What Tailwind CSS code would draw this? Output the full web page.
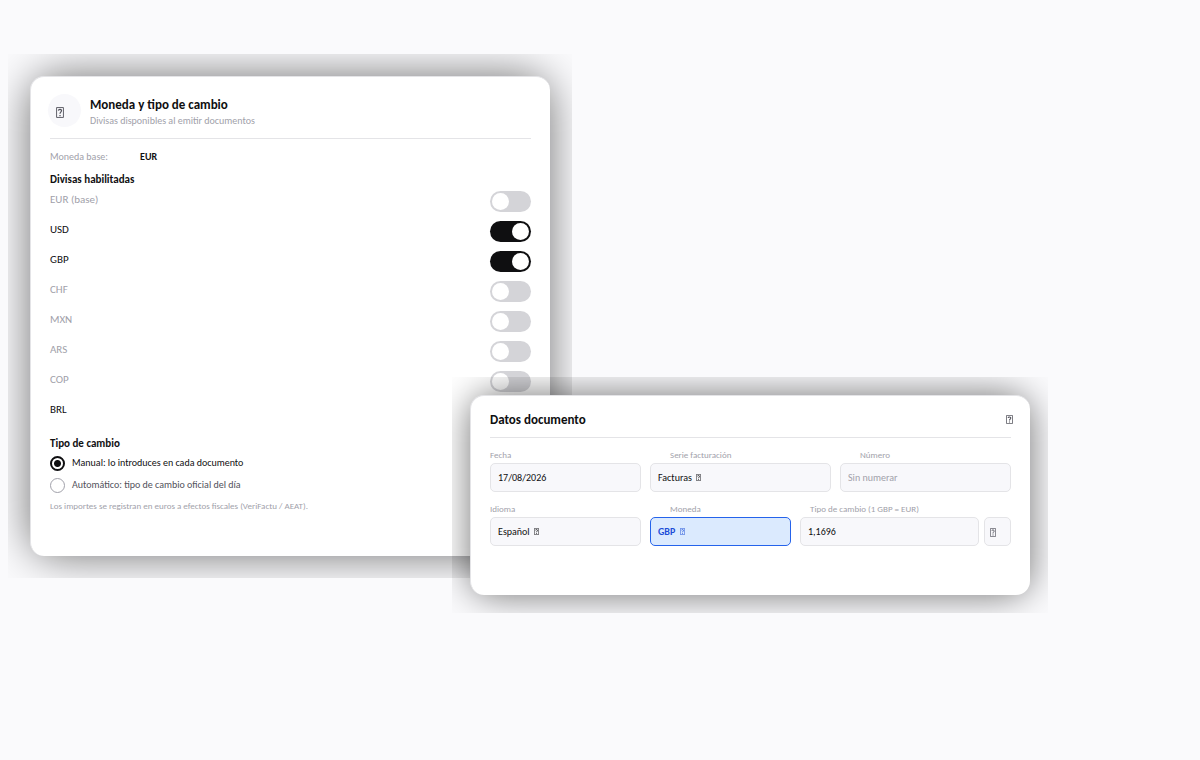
<!DOCTYPE html>
<html lang="es">
<head>
<meta charset="utf-8">
<meta name="viewport" content="width=device-width, initial-scale=1">
<title>Moneda y tipo de cambio</title>
<script src="https://cdn.jsdelivr.net/npm/@tailwindcss/browser@4"></script>
</head>
<body class="min-h-screen bg-[#fafafc] font-[Carlito,Lato,sans-serif] text-[#0f0f11]">
<svg class="hidden" aria-hidden="true">
  <symbol id="glyph" viewBox="0 0 7 10" preserveAspectRatio="none">
    <path d="M.5 .5h6v9h-6z" fill="none" stroke="currentColor" stroke-width=".8"/>
    <path d="M2.100 3.300c.2-1.600 2.900-1.400 2.700.1C4.700 4.700 3.500 4.600 3.500 6.100M3.500 7.200v1.100" fill="none" stroke="currentColor" stroke-width="1.1"/>
  </symbol>
</svg>
<main class="relative min-h-screen px-2 pt-[54px]">
  <div class="relative w-full max-w-[564px] overflow-hidden p-[22px]">
    <div class="absolute inset-[22px] rounded-[28px] bg-black/55 blur-[22px]"></div>
    <section class="relative min-h-[480px] rounded-[14px] border-t border-l border-[#e4e4e7] bg-white pt-[17px] pr-[19px] pl-[19px]">
      <header class="flex h-[45px] border-b border-[#e4e4e7]">
        <span class="-ml-0.5 flex size-[33px] shrink-0 items-center justify-center rounded-full bg-[#f8f8fb] pt-1 pr-2.5 text-[#52525b]"><svg class="h-[11px] w-2"><use href="#glyph"/></svg></span>
        <div class="pl-[9px]">
          <h1 class="text-[13px] leading-[22px] font-bold">Moneda y tipo de cambio</h1>
          <p class="text-[10px] leading-[10px] text-[#a1a1aa]">Divisas disponibles al emitir documentos</p>
        </div>
      </header>
      <dl class="mt-2.5 flex text-[10px] leading-4"><dt class="w-[90px] text-[#a1a1aa]">Moneda base:</dt><dd class="font-bold">EUR</dd></dl>
      <fieldset class="mt-[6px]">
        <legend class="text-[11px] leading-[18px] font-bold">Divisas habilitadas</legend>
        <div class="mt-0.5 text-[11px] leading-[18px]">
          <label class="flex h-[30px] justify-between text-[#a1a1aa]">EUR (base)<input type="checkbox" class="relative h-[21px] w-[41px] appearance-none rounded-full bg-[#d4d4d8] before:absolute before:top-0.5 before:left-0.5 before:size-[17px] before:rounded-full before:bg-white checked:bg-[#0f0f11] checked:before:left-[22px]"></label>
          <label class="flex h-[30px] justify-between">USD<input type="checkbox" checked class="relative h-[21px] w-[41px] appearance-none rounded-full bg-[#d4d4d8] before:absolute before:top-0.5 before:left-0.5 before:size-[17px] before:rounded-full before:bg-white checked:bg-[#0f0f11] checked:before:left-[22px]"></label>
          <label class="flex h-[30px] justify-between">GBP<input type="checkbox" checked class="relative h-[21px] w-[41px] appearance-none rounded-full bg-[#d4d4d8] before:absolute before:top-0.5 before:left-0.5 before:size-[17px] before:rounded-full before:bg-white checked:bg-[#0f0f11] checked:before:left-[22px]"></label>
          <label class="flex h-[30px] justify-between text-[#a1a1aa]">CHF<input type="checkbox" class="relative h-[21px] w-[41px] appearance-none rounded-full bg-[#d4d4d8] before:absolute before:top-0.5 before:left-0.5 before:size-[17px] before:rounded-full before:bg-white checked:bg-[#0f0f11] checked:before:left-[22px]"></label>
          <label class="flex h-[30px] justify-between text-[#a1a1aa]">MXN<input type="checkbox" class="relative h-[21px] w-[41px] appearance-none rounded-full bg-[#d4d4d8] before:absolute before:top-0.5 before:left-0.5 before:size-[17px] before:rounded-full before:bg-white checked:bg-[#0f0f11] checked:before:left-[22px]"></label>
          <label class="flex h-[30px] justify-between text-[#a1a1aa]">ARS<input type="checkbox" class="relative h-[21px] w-[41px] appearance-none rounded-full bg-[#d4d4d8] before:absolute before:top-0.5 before:left-0.5 before:size-[17px] before:rounded-full before:bg-white checked:bg-[#0f0f11] checked:before:left-[22px]"></label>
          <label class="flex h-[30px] justify-between text-[#a1a1aa]">COP<input type="checkbox" class="relative h-[21px] w-[41px] appearance-none rounded-full bg-[#d4d4d8] before:absolute before:top-0.5 before:left-0.5 before:size-[17px] before:rounded-full before:bg-white checked:bg-[#0f0f11] checked:before:left-[22px]"></label>
          <label class="flex h-[30px] justify-between">BRL<input type="checkbox" checked class="relative h-[21px] w-[41px] appearance-none rounded-full bg-[#d4d4d8] before:absolute before:top-0.5 before:left-0.5 before:size-[17px] before:rounded-full before:bg-white checked:bg-[#0f0f11] checked:before:left-[22px]"></label>
        </div>
      </fieldset>
      <fieldset class="mt-1">
        <legend class="text-[11px] leading-[18px] font-bold">Tipo de cambio</legend>
        <div class="mt-[3px] text-[10px] leading-[14px]">
          <label class="flex h-[22px] items-start gap-[7px]"><input type="radio" name="tipo" checked class="size-[15px] appearance-none rounded-full border border-[#a1a1aa] checked:border-2 checked:border-[#0f0f11] checked:bg-[radial-gradient(circle,#0f0f11_3px,transparent_4px)]">Manual: lo introduces en cada documento</label>
          <label class="flex h-[22px] items-start gap-[7px] text-[#52525b]"><input type="radio" name="tipo" class="size-[15px] appearance-none rounded-full border border-[#a1a1aa] checked:border-2 checked:border-[#0f0f11] checked:bg-[radial-gradient(circle,#0f0f11_3px,transparent_4px)]">Automático: tipo de cambio oficial del día</label>
        </div>
      </fieldset>
      <p class="text-[9px] leading-3 text-[#a1a1aa]">Los importes se registran en euros a efectos fiscales (VeriFactu / AEAT).</p>
    </section>
  </div>

  <div class="absolute top-[377px] left-[452px] w-[596px] overflow-hidden p-[18px]">
    <div class="absolute inset-[18px] rounded-[24px] bg-black/55 blur-[18px]"></div>
    <section class="relative min-h-[200px] rounded-[14px] border-t border-l border-[#e4e4e7] bg-white pt-[14px] pr-[19px] pl-[19px]">
      <header class="flex h-7 justify-between border-b border-[#e4e4e7]">
        <h2 class="text-[13px] leading-5 font-bold">Datos documento</h2>
        <button type="button" aria-label="Cerrar" class="-mr-0.5 h-[18px] text-[#52525b]"><svg class="h-[9px] w-[7px]"><use href="#glyph"/></svg></button>
      </header>
      <div class="mt-2.5 grid grid-cols-[151fr_181fr_171fr] gap-x-[9px]">
        <div>
          <label for="fecha" class="block pb-px text-[9px] leading-[14px] text-[#a1a1aa]">Fecha</label>
          <input id="fecha" type="text" value="17/08/2026" class="block h-[29px] w-full rounded-[5px] border border-[#e4e4e7] bg-[#f8f8fb] px-[7px] text-[10px]">
        </div>
        <div>
          <label for="serie" class="block pb-px pl-5 text-[9px] leading-[14px] text-[#a1a1aa]">Serie facturación</label>
          <div class="relative"><select id="serie" class="block h-[29px] w-full appearance-none rounded-[5px] border border-[#e4e4e7] bg-[#f8f8fb] px-[7px] text-[10px]"><option>Facturas</option></select><svg class="pointer-events-none absolute top-[11px] left-[46px] h-[7px] w-[5px]"><use href="#glyph"/></svg></div>
        </div>
        <div>
          <label for="numero" class="block pb-px pl-5 text-[9px] leading-[14px] text-[#a1a1aa]">Número</label>
          <input id="numero" type="text" placeholder="Sin numerar" class="block h-[29px] w-full rounded-[5px] border border-[#e4e4e7] bg-[#f8f8fb] px-[7px] text-[10px] placeholder:text-[#a1a1aa]">
        </div>
      </div>
      <div class="mt-2.5 grid grid-cols-[151fr_141fr_211fr] gap-x-[9px]">
        <div>
          <label for="idioma" class="block pb-px text-[9px] leading-[14px] text-[#a1a1aa]">Idioma</label>
          <div class="relative"><select id="idioma" class="block h-[29px] w-full appearance-none rounded-[5px] border border-[#e4e4e7] bg-[#f8f8fb] px-[7px] text-[10px]"><option>Español</option></select><svg class="pointer-events-none absolute top-[11px] left-[44px] h-[7px] w-[5px]"><use href="#glyph"/></svg></div>
        </div>
        <div>
          <label for="moneda" class="block pb-px pl-5 text-[9px] leading-[14px] text-[#a1a1aa]">Moneda</label>
          <div class="relative text-[#1d4ed8]"><select id="moneda" class="block h-[29px] w-full appearance-none rounded-[5px] border border-[#2563eb] bg-[#dbeafe] px-[7px] text-[10px] font-bold"><option>GBP</option></select><svg class="pointer-events-none absolute top-[11px] left-[30px] h-[7px] w-[5px] stroke-2"><use href="#glyph"/></svg></div>
        </div>
        <div>
          <label for="cambio" class="block pb-px pl-2.5 text-[9px] leading-[14px] text-[#a1a1aa]">Tipo de cambio (1 GBP = EUR)</label>
          <div class="flex gap-[5px]">
            <input id="cambio" type="text" value="1,1696" class="block h-[29px] min-w-0 flex-1 rounded-[5px] border border-[#e4e4e7] bg-[#f8f8fb] px-[7px] text-[10px]">
            <button type="button" aria-label="Actualizar tipo de cambio" class="h-[29px] w-[27px] rounded-[5px] border border-[#e4e4e7] bg-[#f8f8fb] pt-0.5 pl-[5px] text-[#52525b]"><svg class="h-[9px] w-1.5"><use href="#glyph"/></svg></button>
          </div>
        </div>
      </div>
    </section>
  </div>
</main>
</body>
</html>
